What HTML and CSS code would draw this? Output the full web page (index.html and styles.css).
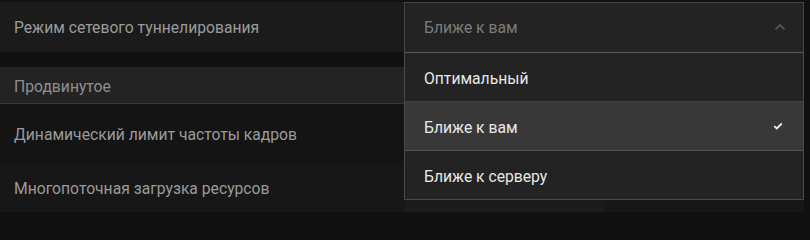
FILE: index.html
```html
<!DOCTYPE html>
<html lang="ru">
<head>
<meta charset="utf-8">
<title>Настройки</title>
<link rel="stylesheet" href="styles.css">
</head>
<body>
<div class="panel">
  <div class="row row-first">
    <div class="label">Режим сетевого туннелирования</div>
    <div class="select">
      <div class="select-head">
        <span class="select-value">Ближе к вам</span>
        <svg class="chevron" width="12" height="8" viewBox="0 0 12 8"><path d="M1.5 6.5 L6 2 L10.5 6.5" fill="none" stroke="#5a5a5a" stroke-width="1.6"/></svg>
      </div>
      <ul class="menu">
        <li class="option">Оптимальный</li>
        <li class="option selected">Ближе к вам
          <svg class="check" width="10" height="8" viewBox="0 0 10 8"><path d="M1.2 4.2 L3.8 6.5 L8.8 1.5" fill="none" stroke="#f0f0f0" stroke-width="1.8"/></svg>
        </li>
        <li class="option">Ближе к серверу</li>
      </ul>
    </div>
  </div>
  <div class="section">Продвинутое</div>
  <div class="row row-a">
    <div class="label">Динамический лимит частоты кадров</div>
  </div>
  <div class="row row-b">
    <div class="label">Многопоточная загрузка ресурсов</div>
    <div class="control"></div>
  </div>
</div>
</body>
</html>
```

FILE: styles.css
```css
* { box-sizing: border-box; }
html, body {
  margin: 0;
  padding: 0;
  background: #111111;
  height: 212px;
  overflow: hidden;
}
body {
  font-family: Roboto, "Liberation Sans", sans-serif;
  font-size: 15.7px;
}
.panel {
  width: 804px;
  height: 212px;
  overflow: hidden;
  padding-top: 2px;
}
.row {
  display: flex;
  align-items: center;
  justify-content: space-between;
}
.label {
  color: #9b9b9b;
  padding-left: 14px;
  padding-top: 1px;
}
.row-first {
  height: 50px;
  background: #1b1b1b;
  margin-bottom: 15px;
  position: relative;
}
.row-first .label { padding-top: 0; }
.select {
  position: relative;
  width: 400px;
  height: 50px;
  align-self: stretch;
}
.select-head {
  height: 51px;
  background: #232323;
  border: 1px solid #464646;
  display: flex;
  align-items: center;
  justify-content: space-between;
  padding: 0 17px 0 19px;
}
.select-value {
  color: #7c7c7c;
}
.chevron { margin-top: -1px; }
.menu {
  position: absolute;
  left: 0;
  top: 50px;
  width: 400px;
  margin: 0;
  padding: 0;
  list-style: none;
  background: #232323;
  border: 1px solid #4a4a4a;
  border-top: 1px solid #5a5a5a;
  z-index: 5;
}
.option {
  height: 49px;
  display: flex;
  align-items: center;
  justify-content: space-between;
  padding: 3px 20px 0 19px;
  color: #e8e8e8;
  border-bottom: 1px solid #404040;
}
.option:last-child { border-bottom: none; height: 48px; }
.option.selected { background: #383838; border-bottom-color: #555555; }
.check { margin-top: -3px; }
.section {
  height: 37px;
  background: #232323;
  border-bottom: 1px solid #3b3b3b;
  color: #8f8f8f;
  padding-left: 14px;
  padding-top: 2px;
  display: flex;
  align-items: center;
}
.row-a {
  height: 59px;
  background: #141414;
}
.row-b {
  height: 50px;
  background: #171717;
  align-items: flex-end;
}
.row-b .label { align-self: center; }
.control {
  width: 199px;
  height: 13px;
  background: #1c1c1c;
  margin-right: 200px;
  border-top: 6px solid #1a1a1a;
}
```
